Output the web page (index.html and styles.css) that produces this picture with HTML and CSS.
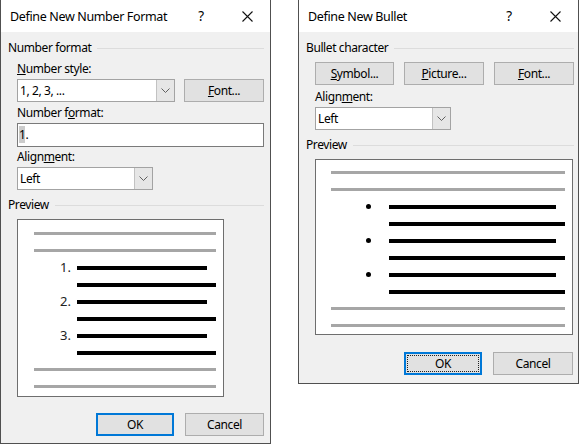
FILE: index.html
```html
<!DOCTYPE html>
<html>
<head>
<meta charset="utf-8">
<link rel="stylesheet" href="styles.css">
</head>
<body>
<div class="screen">
  <div class="dlg dlg-num">
    <div class="titlebar">
      <span class="title">Define New Number Format</span>
      <span class="tb-btn help">?</span>
      <span class="tb-btn close"><svg width="11" height="11" viewBox="0 0 11 11"><path d="M0.5 0.5L10.5 10.5M10.5 0.5L0.5 10.5" stroke="#111" stroke-width="1.1" fill="none"/></svg></span>
    </div>
    <div class="body">
      <div class="group-hd"><span>Number format</span><i class="rule"></i></div>
      <div class="group">
        <div class="label first-num"><u>N</u>umber style:</div>
        <div class="row">
          <div class="combo combo-style"><span class="combo-val">1, 2, 3, ...</span><span class="combo-btn"><svg width="9" height="5" viewBox="0 0 9 5"><path d="M0.5 0.5L4.5 4.5L8.5 0.5" stroke="#606060" fill="none"/></svg></span></div>
          <button class="btn btn-font"><u>F</u>ont...</button>
        </div>
        <div class="label lbl-fmt">Number f<u>o</u>rmat:</div>
        <div class="textbox"><span class="sel">1</span>.</div>
        <div class="label lbl-align">Align<u>m</u>ent:</div>
        <div class="combo combo-align"><span class="combo-val">Left</span><span class="combo-btn"><svg width="9" height="5" viewBox="0 0 9 5"><path d="M0.5 0.5L4.5 4.5L8.5 0.5" stroke="#606060" fill="none"/></svg></span></div>
      </div>
      <div class="group-hd preview-hd"><span>Preview</span><i class="rule"></i></div>
      <div class="preview pv-num">
        <div class="pl"><i class="gray"></i></div>
        <div class="pl"><i class="gray"></i></div>
        <div class="pl"><span class="num">1.</span><i class="bar first"></i></div>
        <div class="pl"><span class="num"></span><i class="bar"></i></div>
        <div class="pl"><span class="num">2.</span><i class="bar first"></i></div>
        <div class="pl"><span class="num"></span><i class="bar"></i></div>
        <div class="pl"><span class="num">3.</span><i class="bar first"></i></div>
        <div class="pl"><span class="num"></span><i class="bar"></i></div>
        <div class="pl"><i class="gray"></i></div>
        <div class="pl"><i class="gray"></i></div>
      </div>
      <div class="actions">
        <button class="btn btn-ok default">OK</button>
        <button class="btn btn-cancel">Cancel</button>
      </div>
    </div>
  </div>

  <div class="dlg dlg-bul">
    <div class="titlebar">
      <span class="title">Define New Bullet</span>
      <span class="tb-btn help">?</span>
      <span class="tb-btn close"><svg width="11" height="11" viewBox="0 0 11 11"><path d="M0.5 0.5L10.5 10.5M10.5 0.5L0.5 10.5" stroke="#111" stroke-width="1.1" fill="none"/></svg></span>
    </div>
    <div class="body">
      <div class="group-hd"><span>Bullet character</span><i class="rule"></i></div>
      <div class="group">
        <div class="row btn-row">
          <button class="btn btn-sym"><u>S</u>ymbol...</button>
          <button class="btn btn-pic"><u>P</u>icture...</button>
          <button class="btn btn-fnt"><u>F</u>ont...</button>
        </div>
        <div class="label lbl-balign">Align<u>m</u>ent:</div>
        <div class="combo combo-align"><span class="combo-val">Left</span><span class="combo-btn"><svg width="9" height="5" viewBox="0 0 9 5"><path d="M0.5 0.5L4.5 4.5L8.5 0.5" stroke="#606060" fill="none"/></svg></span></div>
      </div>
      <div class="group-hd preview-hd"><span>Preview</span><i class="rule"></i></div>
      <div class="preview pv-bul">
        <div class="pl"><i class="gray"></i></div>
        <div class="pl"><i class="gray"></i></div>
        <div class="pl"><span class="bul"><b class="dot"></b></span><i class="bar first"></i></div>
        <div class="pl"><span class="bul"></span><i class="bar"></i></div>
        <div class="pl"><span class="bul"><b class="dot"></b></span><i class="bar first"></i></div>
        <div class="pl"><span class="bul"></span><i class="bar"></i></div>
        <div class="pl"><span class="bul"><b class="dot"></b></span><i class="bar first"></i></div>
        <div class="pl"><span class="bul"></span><i class="bar"></i></div>
        <div class="pl"><i class="gray"></i></div>
        <div class="pl"><i class="gray"></i></div>
      </div>
      <div class="actions">
        <button class="btn btn-ok default focus">OK</button>
        <button class="btn btn-cancel2">Cancel</button>
      </div>
    </div>
  </div>
</div>
</body>
</html>
```
FILE: styles.css
```css
html, body {
  margin: 0;
  background: #fff;
}
body {
  font-family: "Noto Sans", "Open Sans", sans-serif;
  font-size: 12px;
  letter-spacing: -0.4px;
  color: #000;
}
.screen {
  display: flex;
  align-items: flex-start;
  gap: 27px;
}
.dlg {
  box-sizing: border-box;
  border: 1px solid #505050;
  border-top: 0;
  background: #f0f0f0;
}
.dlg-num { width: 271px; }
.dlg-bul { width: 281px; }

.titlebar {
  height: 32px;
  background: #fff;
  display: flex;
  align-items: center;
}
.title {
  flex: 1;
  padding-left: 9px;
  font-size: 12.5px;
  letter-spacing: -0.35px;
  white-space: nowrap;
}
.tb-btn {
  width: 46px;
  height: 32px;
  display: flex;
  align-items: center;
  justify-content: center;
  font-size: 13.5px;
}

.body {
  padding: 8px 6px 7px 7px;
}
.dlg-bul .body { padding-right: 4px; padding-bottom: 8px; }

.group-hd {
  display: flex;
  align-items: center;
  height: 16px;
  line-height: 16px;
  white-space: nowrap;
}
.rule {
  flex: 1;
  height: 1px;
  background: #dcdcdc;
  margin-left: 6px;
}
.group { padding-left: 9px; }

.label {
  height: 16px;
  line-height: 16px;
  margin-bottom: 2px;
}
.first-num { margin-top: 5px; }
.lbl-fmt { margin-top: 3px; }
.lbl-align { margin-top: 2px; }
.lbl-balign { margin-top: 4px; }

.row { display: flex; }
.row .combo-style { margin-right: 9px; }
.btn-row { margin-top: 6px; gap: 10px; }

.combo {
  box-sizing: border-box;
  height: 23px;
  border: 1px solid #a3a3a3;
  background: #fff;
  display: flex;
}
.combo-style { width: 158px; }
.combo-align { width: 136px; }
.combo-val {
  flex: 1;
  padding-left: 2px;
  line-height: 21px;
}
.combo-btn {
  width: 17px;
  background: #e6e6e6;
  border-left: 1px solid #c2c2c2;
  display: flex;
  align-items: center;
  justify-content: center;
}

.textbox {
  box-sizing: border-box;
  height: 24px;
  border: 1px solid #7a7a7a;
  background: #fff;
  line-height: 22px;
  padding-left: 1px;
}
.sel { background: #cccccc; }

.btn {
  box-sizing: border-box;
  height: 23px;
  padding: 0;
  margin: 0;
  border: 1px solid #adadad;
  background: #e1e1e1;
  font-family: inherit;
  font-size: 12px;
  letter-spacing: -0.4px;
  color: #000;
}
.btn-font { width: 80px; }
.btn-sym { width: 79px; }
.btn-pic { width: 80px; }
.btn-fnt { width: 80px; }
.btn-ok { width: 78px; }
.btn-cancel { width: 79px; }
.btn-cancel2 { width: 80px; margin-right: 1px; }
.default {
  border: 1px solid #0078d7;
  box-shadow: inset 0 0 0 1px #0078d7;
}
.focus {
  outline: 1px dotted #222;
  outline-offset: -4px;
}

.preview-hd { margin-top: 7px; }
.preview {
  box-sizing: border-box;
  margin-top: 6px;
  margin-left: 9px;
  background: #fff;
  border: 1px solid #6e6e6e;
}
.pv-num {
  width: 207px;
  height: 178px;
  padding: 5px 7px 0 16px;
}
.pv-bul {
  width: 258px;
  height: 176px;
  padding: 4px 7px 0 15px;
}
.pl {
  height: 17px;
  display: flex;
  align-items: center;
}
.gray {
  display: block;
  flex: 1;
  height: 3px;
  background: #a6a6a6;
}
.bar {
  display: block;
  height: 4px;
  background: #000;
  flex: 1;
}
.pv-num .bar.first { flex: none; width: 130px; }
.pv-bul .bar.first { flex: none; width: 167px; }
.num {
  width: 37px;
  margin-right: 6px;
  text-align: right;
  font-size: 13px;
  letter-spacing: 0;
  color: #222;
  line-height: 17px;
}
.bul {
  width: 40px;
  margin-right: 18px;
  display: flex;
  justify-content: flex-end;
}
.dot {
  display: block;
  width: 5px;
  height: 5px;
  border-radius: 50%;
  background: #000;
}

.actions {
  display: flex;
  justify-content: flex-end;
  gap: 11px;
}
.dlg-num .actions { margin-top: 16px; }
.dlg-bul .actions { margin-top: 17px; }
```
